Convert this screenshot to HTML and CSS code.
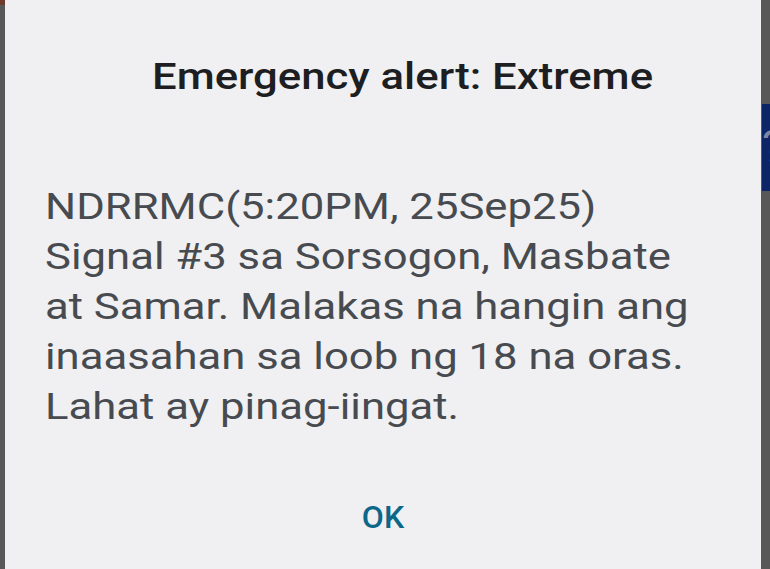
FILE: index.html
```html
<!DOCTYPE html>
<html lang="en">
<head>
    <meta charset="UTF-8">
    <meta name="viewport" content="width=device-width, initial-scale=1.0">
    <title>Emergency alert</title>
    <link rel="stylesheet" href="styles.css">
</head>
<body>
    <div class="edge edge-left">
        <div class="edge-spot"></div>
    </div>
    <div class="dialog">
        <h1 class="alert-title">Emergency alert: Extreme</h1>
        <p class="alert-message">NDRRMC(5:20PM, 25Sep25)<br>Signal #3 sa Sorsogon, Masbate<br>at Samar. Malakas na hangin ang<br>inaasahan sa loob ng 18 na oras.<br>Lahat ay pinag-iingat.</p>
        <div class="actions">
            <button class="ok-button">OK</button>
        </div>
    </div>
    <div class="edge edge-right">
        <div class="help-tab">?</div>
    </div>
</body>
</html>
```

FILE: styles.css
```css
body {
    margin: 0;
    height: 100vh;
    display: flex;
    overflow: hidden;
    background-color: #585858;
    font-family: Roboto, 'Noto Sans', sans-serif;
}
.edge {
    background-color: #585858;
    overflow: hidden;
}
.edge-left {
    width: 5px;
}
.edge-spot {
    height: 5px;
    background-color: #6e3b2c;
}
.edge-right {
    width: 9px;
    padding-top: 104px;
}
.help-tab {
    height: 87px;
    width: 9px;
    margin-left: 1px;
    overflow: hidden;
    background-color: #0c2566;
    color: #7d86a3;
    font-size: 46px;
    line-height: 87px;
}
.dialog {
    flex: 1;
    min-width: 0;
    overflow: hidden;
    background-color: #f0f0f2;
    padding: 0 40px;
    display: flex;
    flex-direction: column;
}
/* the source capture is stretched sideways, so the text is too */
.alert-title,
.alert-message {
    align-self: flex-start;
    transform: scaleX(1.18);
    transform-origin: left top;
    white-space: nowrap;
}
.alert-title {
    margin: 55px 0 0 107px;
    font-size: 37px;
    font-weight: 500;
    line-height: 44px;
    color: #1d1e21;
}
.alert-message {
    margin: 83px 0 0;
    font-size: 37px;
    line-height: 50px;
    color: #474b50;
}
.actions {
    margin-top: 65px;
    text-align: center;
}
.ok-button {
    background: none;
    border: none;
    padding: 0;
    font-family: inherit;
    font-size: 32px;
    font-weight: 500;
    line-height: 40px;
    color: #0d6788;
    cursor: pointer;
}
```
